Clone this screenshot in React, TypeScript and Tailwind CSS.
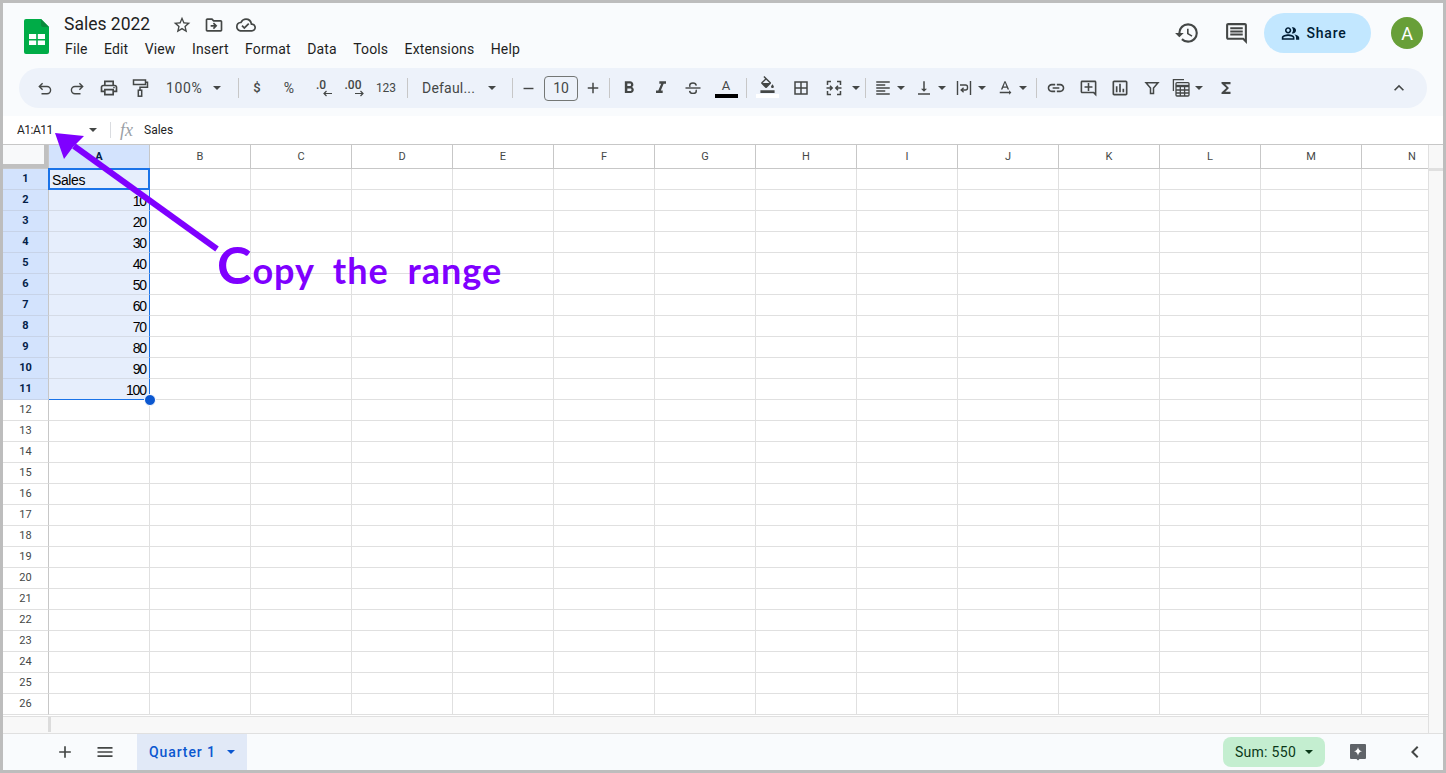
import React from "react";
import {
  MdFormatBold, MdFormatItalic,
  MdOutlineFormatColorFill, MdBorderAll, MdFormatAlignLeft, MdVerticalAlignBottom, MdTextRotationNone,
  MdLink, MdOutlineAddComment, MdOutlineInsertChart, MdFunctions, MdExpandLess, MdStarBorder,
  MdOutlineDriveFileMove, MdOutlineCloudDone, MdHistory, MdOutlineComment, MdOutlinePeopleAlt, MdAdd,
  MdMenu, MdChevronLeft, MdRemove, MdOutlinePrint,
} from "react-icons/md";

const Caret = ({ className = "" }: { className?: string }) => (
  <svg width="8" height="4" viewBox="0 0 8 4" className={className}><path d="M0 0h8L4 4z" fill="currentColor" /></svg>
);

const Sep = ({ ml = "ml-[6px]" }: { ml?: string }) => <div className={`w-px h-5 bg-[#c7c7c7] shrink-0 ${ml}`} />;

const Btn = ({ w = "w-8", ml = "", children }: { w?: string; ml?: string; children: React.ReactNode }) => (
  <div className={`${w} ${ml} h-8 shrink-0 flex items-center justify-center text-[#444746]`}>{children}</div>
);

const CaretBtn = () => (
  <Btn w="w-3"><Caret /></Btn>
);

const Undo = () => (
  <svg width="18" height="18" viewBox="0 0 18 18" fill="none" stroke="currentColor" strokeWidth="1.4">
    <path d="M3.5 7.5H11a3.6 3.6 0 0 1 0 7.2H5.5M6.6 4.2 3.3 7.5l3.3 3.3" />
  </svg>
);

const Redo = () => (
  <svg width="18" height="18" viewBox="0 0 18 18" fill="none" stroke="currentColor" strokeWidth="1.4">
    <path d="M14.5 7.5H7a3.6 3.6 0 0 0 0 7.2h5.5M11.4 4.2l3.3 3.3-3.3 3.3" />
  </svg>
);

const Paint = () => (
  <svg width="18" height="20" viewBox="0 0 18 20" fill="none" stroke="currentColor" strokeWidth="1.5">
    <rect x="2.5" y="2" width="12" height="4.5" />
    <path d="M14.5 4.2h2v5H9v3" />
    <rect x="7.3" y="12.2" width="3.4" height="6" />
  </svg>
);

const Strike = () => (
  <svg width="18" height="18" viewBox="0 0 18 18" fill="none" stroke="currentColor" strokeWidth="1.4">
    <path d="M1.5 9h15" />
    <path d="M12.3 6.6C12 4.9 10.6 4 9 4S5.7 4.9 5.7 6.4c0 .5.2 1 .5 1.4" />
    <path d="M12 10.8c.2.4.3.7.3 1.1 0 1.5-1.5 2.5-3.3 2.5s-3.2-1-3.4-2.6" />
  </svg>
);

const Merge = () => (
  <svg width="18" height="18" viewBox="0 0 18 18" fill="none" stroke="currentColor" strokeWidth="1.5">
    <path d="M6 2.5H2.5V6M12 2.5h3.5V6M6 15.5H2.5V12M12 15.5h3.5V12" />
    <path d="M1.5 9H7M5 6.8 7.2 9 5 11.2M16.5 9H11M13 6.8 10.8 9l2.2 2.2" />
  </svg>
);

const Wrap = () => (
  <svg width="18" height="18" viewBox="0 0 18 18" fill="none" stroke="currentColor" strokeWidth="1.4">
    <path d="M2.5 2v14M15.5 2v14" />
    <path d="M5 6h5.5a2 2 0 0 1 2 2v1a2 2 0 0 1-2 2H6.5M8.6 8.8 6.2 11l2.4 2.2" />
  </svg>
);

const Filter = () => (
  <svg width="16" height="16" viewBox="0 0 16 16" fill="none" stroke="currentColor" strokeWidth="1.5">
    <path d="M2 2.8h12L9.5 8v5.5h-3V8z" />
  </svg>
);

const TableView = () => (
  <svg width="20" height="20" viewBox="0 0 20 20" fill="none" stroke="currentColor" strokeWidth="1.3">
    <path d="M13 1.7H2.4V13" />
    <rect x="5" y="4.6" width="13" height="13.4" rx="1" />
    <path d="M5 8h13" strokeWidth="2.4" />
    <path d="M5 12h13M5 15h13M9.3 9v9M13.6 9v9" />
  </svg>
);

const Explore = () => (
  <svg width="16" height="17" viewBox="0 0 16 17">
    <path d="M1 0h14a1 1 0 0 1 1 1v13a1 1 0 0 1-1 1H9.5L8 16.6 6.5 15H1a1 1 0 0 1-1-1V1a1 1 0 0 1 1-1z" fill="#5f6368" />
    <path d="M8 3c.5 2.6 1.4 3.6 4 4.3-2.6.7-3.5 1.7-4 4.4-.5-2.7-1.4-3.7-4-4.4 2.6-.7 3.5-1.7 4-4.3z" fill="#fff" />
  </svg>
);

const Logo = () => (
  <svg width="25" height="35" viewBox="0 0 25 35" className="shrink-0">
    <path d="M2 0h15l8 8v25a2 2 0 0 1-2 2H2a2 2 0 0 1-2-2V2a2 2 0 0 1 2-2z" fill="#00ac47" />
    <path d="M17 0l8 8h-6a2 2 0 0 1-2-2z" fill="#0a8a3c" />
    <path d="M5 15h16v11H5z" fill="#fff" />
    <path d="M5 20h16v1.5H5zM12.2 15h1.6v11h-1.6z" fill="#00ac47" />
  </svg>
);

const columns = ["A", "B", "C", "D", "E", "F", "G", "H", "I", "J", "K", "L", "M", "N"];
const rows = Array.from({ length: 26 }, (_, i) => i + 1);
const values: Record<number, string> = { 2: "10", 3: "20", 4: "30", 5: "40", 6: "50", 7: "60", 8: "70", 9: "80", 10: "90", 11: "100" };
const menus = ["File", "Edit", "View", "Insert", "Format", "Data", "Tools", "Extensions", "Help"];

export default function App() {
  return (
    <div className="relative w-[1446px] h-[773px] border-[3px] border-[#bdbdbd] overflow-hidden flex flex-col bg-white font-['Roboto',sans-serif] text-[#1f1f1f]">
      {/* header */}
      <header className="h-[113px] shrink-0 bg-[#f9fbfd] flex flex-col">
        <div className="h-[65px] shrink-0 flex items-start pl-[21px] pr-[20px]">
          <div className="mt-[16px] mr-[15px]"><Logo /></div>
          <div className="mt-[10px] flex flex-col">
            <div className="flex items-center h-[22px]">
              <span className="text-[17.5px] leading-[22px] w-[108px]">Sales 2022</span>
              <div className="flex items-center gap-[12px] text-[#444746] mt-[2px]">
                <MdStarBorder size={20} />
                <MdOutlineDriveFileMove size={20} />
                <MdOutlineCloudDone size={20} />
              </div>
            </div>
            <nav className="flex gap-[16.4px] mt-[4px] ml-[1px] text-[14px] leading-[20px] tracking-[0.15px] text-[#1f1f1f]">
              {menus.map((m) => <span key={m}>{m}</span>)}
            </nav>
          </div>
          <div className="ml-auto flex items-center h-[60px] text-[#444746]">
            <MdHistory size={26} />
            <div className="ml-[24px]"><MdOutlineComment size={25} /></div>
            <div className="ml-[15px] w-[107px] h-[40px] pr-[7px] rounded-[20px] bg-[#c2e7ff] flex items-center justify-center gap-[6px] text-[#001d35]">
              <MdOutlinePeopleAlt size={19} />
              <span className="text-[14px] font-medium tracking-[0.8px]">Share</span>
            </div>
            <div className="ml-[20px] w-8 h-8 rounded-full bg-[#689f38] text-white text-[18px] flex items-center justify-center">A</div>
          </div>
        </div>
        <div className="ml-[16px] mr-[16px] h-[40px] rounded-[20px] bg-[#edf2fa] flex items-center pl-[10px] pr-[12px] text-[#444746]">
          <Btn><Undo /></Btn>
          <Btn><Redo /></Btn>
          <Btn w="w-[31px]"><MdOutlinePrint size={20} /></Btn>
          <Btn><Paint /></Btn>
          <div className="w-[76px] h-8 shrink-0 flex items-center pl-[10px] text-[14px] tracking-[0.6px]">
            <span>100%</span><Caret className="ml-[11px]" />
          </div>
          <Sep />
          <Btn ml="ml-[2px]"><span className="text-[13px] font-medium">$</span></Btn>
          <Btn><span className="text-[14px]">%</span></Btn>
          <Btn>
            <div className="relative w-5 h-5 text-[12px] font-medium leading-[15px] text-center">.0
              <svg width="9" height="7" viewBox="0 0 9 7" className="absolute right-[-1px] bottom-[1px]" fill="none" stroke="currentColor" strokeWidth="1.2"><path d="M9 3.5H1M3.5 1 1 3.5 3.5 6" /></svg>
            </div>
          </Btn>
          <Btn>
            <div className="relative w-6 h-5 text-[12px] font-medium leading-[15px] text-center">.00
              <svg width="9" height="7" viewBox="0 0 9 7" className="absolute right-[1px] bottom-[1px]" fill="none" stroke="currentColor" strokeWidth="1.2"><path d="M0 3.5h8M5.5 1 8 3.5 5.5 6" /></svg>
            </div>
          </Btn>
          <Btn ml="ml-px"><span className="text-[12px]">123</span></Btn>
          <Sep ml="ml-[5px]" />
          <div className="w-[98px] h-8 shrink-0 flex items-center pl-[14px] text-[14px] tracking-[0.2px]">
            <span className="w-[60px]">Defaul...</span><Caret className="ml-[6px]" />
          </div>
          <Sep />
          <Btn w="w-[31px]"><MdRemove size={17} /></Btn>
          <div className="w-[34px] h-[25px] shrink-0 rounded-[4px] border border-[#747775] text-[14px] flex items-center justify-center">10</div>
          <Btn w="w-[30px]"><MdAdd size={18} /></Btn>
          <Sep ml="ml-px" />
          <Btn ml="ml-[3px]"><MdFormatBold size={20} /></Btn>
          <Btn><MdFormatItalic size={20} /></Btn>
          <Btn><Strike /></Btn>
          <Btn ml="ml-px">
            <div className="flex flex-col items-center w-[23px]">
              <span className="text-[13px] leading-[13px]">A</span>
              <div className="w-[23px] h-[4px] bg-black mt-[2px]" />
            </div>
          </Btn>
          <Sep ml="ml-[4px]" />
          <Btn ml="ml-[4px]">
            <div className="flex flex-col items-center w-[23px]">
              <MdOutlineFormatColorFill size={17} className="-mt-[3px]" />
              <div className="w-[23px] h-[4px] bg-white mt-px" />
            </div>
          </Btn>
          <Btn ml="ml-[2px]"><MdBorderAll size={18} /></Btn>
          <Btn ml="ml-px"><Merge /></Btn>
          <CaretBtn />
          <Sep ml="ml-[3px]" />
          <Btn w="w-6" ml="ml-[5px]"><MdFormatAlignLeft size={18} /></Btn>
          <CaretBtn />
          <Btn w="w-6" ml="ml-[5px]"><MdVerticalAlignBottom size={18} /></Btn>
          <CaretBtn />
          <Btn w="w-6" ml="ml-[4px]"><Wrap /></Btn>
          <CaretBtn />
          <Btn w="w-6" ml="ml-[5px]"><MdTextRotationNone size={18} /></Btn>
          <CaretBtn />
          <Sep ml="ml-[7px]" />
          <Btn ml="ml-[3px]"><MdLink size={20} /></Btn>
          <Btn><MdOutlineAddComment size={19} /></Btn>
          <Btn><MdOutlineInsertChart size={20} /></Btn>
          <Btn><Filter /></Btn>
          <Btn w="w-6" ml="ml-px"><TableView /></Btn>
          <CaretBtn />
          <Btn ml="ml-[5px]"><MdFunctions size={18} /></Btn>
          <div className="ml-auto"><Btn><MdExpandLess size={20} /></Btn></div>
        </div>
      </header>

      {/* formula bar */}
      <div className="h-[29px] shrink-0 border-b border-[#c7c7c7] flex items-center text-[12px] text-[#1f1f1f] bg-white">
        <span className="ml-[14px] w-[72px] tracking-[-0.5px]">A1:A11</span>
        <Caret className="text-[#444746]" />
        <div className="ml-[13px] w-px h-[16px] bg-[#dadce0]" />
        <span className="ml-[9px] w-[24px] text-[18px] leading-[18px] italic text-[#9aa0a6] font-['Liberation_Serif',serif]">fx</span>
        <span>Sales</span>
      </div>

      {/* grid */}
      <div className="flex-1 min-h-0 flex">
        <div className="w-[1425px] shrink-0 overflow-hidden flex flex-col">
          <div className="h-[24px] shrink-0 flex border-b border-[#c7c7c7]">
            <div className="relative w-[46px] shrink-0 bg-[#f8f9fa] border-r border-[#c7c7c7]">
              <div className="absolute right-0 top-0 bottom-0 w-[4px] bg-[#c0c0c0]" />
              <div className="absolute left-0 right-0 bottom-0 h-[4px] bg-[#c0c0c0]" />
            </div>
            {columns.map((c) => (
              <div key={c} className={`w-[101px] shrink-0 border-r border-[#c7c7c7] pt-px flex items-center justify-center text-[11px] ${c === "A" ? "bg-[#d3e3fd] font-bold text-[#041e49]" : "text-[#444746]"}`}>{c}</div>
            ))}
          </div>
          {rows.map((r) => {
            const sel = r <= 11;
            return (
              <div key={r} className="h-[21px] shrink-0 flex">
                <div className={`w-[46px] shrink-0 border-r border-b border-r-[#c7c7c7] flex items-center justify-center text-[11px] ${sel ? "bg-[#d3e3fd] border-b-[#c7d3e8] font-bold text-[#041e49]" : "border-b-[#e0e0e0] text-[#444746]"}`}>{r}</div>
                <div className={`relative w-[101px] shrink-0 border-r border-b flex items-center px-[3px] pt-[2px] text-[14px] text-black font-['Liberation_Sans',sans-serif] ${sel ? "bg-[#e6eefc] border-r-[#1a73e8]" : "border-r-[#e0e0e0]"} ${r === 11 ? "border-b-[#1a73e8]" : sel ? "border-b-[#d5dbe6]" : "border-b-[#e0e0e0]"} ${r === 1 ? "justify-start tracking-[-0.4px]" : "justify-end tracking-[-1.1px]"}`}>
                  {r === 1 ? "Sales" : values[r] ?? ""}
                  {r === 1 && <div className="absolute -left-px -top-px right-[-1px] bottom-[-1px] border-2 border-[#1a73e8]" />}
                  {r === 11 && <div className="absolute z-10 right-[-7px] bottom-[-7px] w-[10px] h-[10px] rounded-full bg-[#0b57d0] border border-white box-content" />}
                </div>
                {columns.slice(1).map((c) => (
                  <div key={c} className="w-[101px] shrink-0 border-r border-b border-[#e0e0e0]" />
                ))}
              </div>
            );
          })}
          <div className="h-px shrink-0" />
          <div className="h-[17px] shrink-0 border-t border-[#e0e0e0] bg-[#f8f8f8] flex items-stretch">
            <div className="ml-[45px] w-[3px] bg-[#dcdcdc] mb-px" />
          </div>
        </div>
        <div className="w-[15px] shrink-0 border-l border-[#e0e0e0] bg-[#f8f8f8] flex flex-col">
          <div className="h-[23px] shrink-0" />
          <div className="h-[3px] shrink-0 bg-[#e0e0e0]" />
        </div>
      </div>

      {/* tabs */}
      <footer className="h-[37px] shrink-0 border-t border-[#e0e0e0] bg-[#f9fbfd] flex items-stretch pl-[52px] pr-[16px] text-[#444746]">
        <div className="flex items-center"><MdAdd size={20} /></div>
        <div className="flex items-center ml-[20px]"><MdMenu size={20} /></div>
        <div className="ml-[22px] w-[110px] bg-[#e1e9f7] flex items-center pl-[12px] text-[#0b57d0] text-[14px] font-medium tracking-[0.9px]">
          <span className="w-[78px]">Quarter 1</span><Caret />
        </div>
        <div className="ml-auto flex items-center">
          <div className="w-[102px] h-[30px] rounded-[8px] bg-[#c4eed0] flex items-center justify-center gap-[9px] text-[14px] text-[#0a3818] tracking-[0.3px]">
            <span>Sum: 550</span><Caret />
          </div>
          <div className="ml-[25px] w-4 flex justify-center"><Explore /></div>
          <div className="ml-[37px]"><MdChevronLeft size={24} /></div>
        </div>
      </footer>

      {/* annotation over the page */}
      <svg className="absolute left-[-3px] top-[-3px] pointer-events-none" width="1446" height="773" viewBox="0 0 1446 773">
        <path d="M217 249 74 146" stroke="#7f00ff" strokeWidth="6" fill="none" />
        <path d="M55 133 84 136 73 147 64 159z" fill="#7f00ff" />
      </svg>
      <div className="absolute left-[214px] top-[231px] text-[#7f00ff] text-[36px] leading-[60px] font-bold tracking-[1px] [word-spacing:9px] font-['Lato',sans-serif] whitespace-nowrap pointer-events-none">
        <span className="text-[52px]">C</span>opy the range
      </div>
    </div>
  );
}
